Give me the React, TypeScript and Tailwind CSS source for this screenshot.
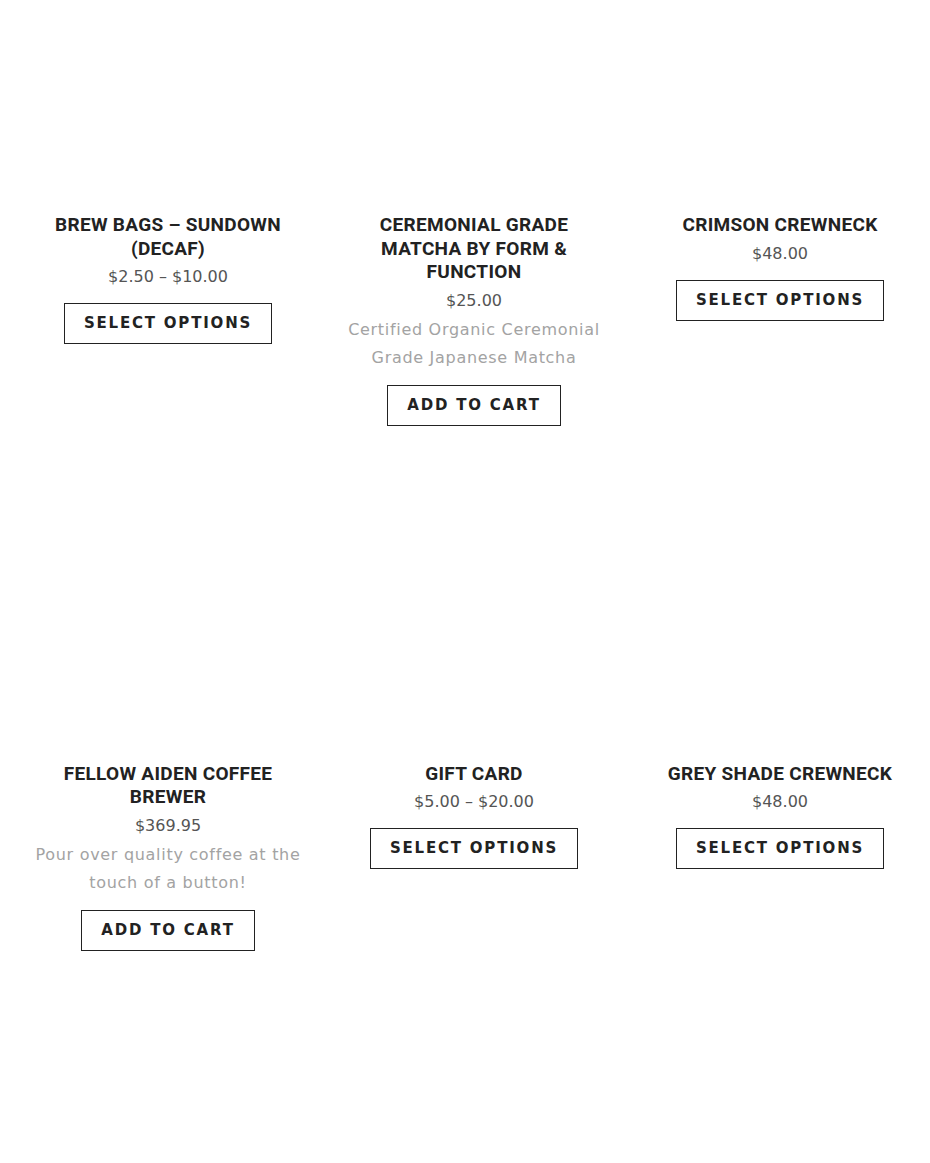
type Product = {
  title: string;
  price: string;
  desc?: string;
  action: string;
};

const products: Product[] = [
  { title: "Brew Bags – Sundown (Decaf)", price: "$2.50 – $10.00", action: "Select options" },
  {
    title: "Ceremonial Grade Matcha by Form & Function",
    price: "$25.00",
    desc: "Certified Organic Ceremonial Grade Japanese Matcha",
    action: "Add to cart",
  },
  { title: "Crimson Crewneck", price: "$48.00", action: "Select options" },
  {
    title: "Fellow Aiden Coffee Brewer",
    price: "$369.95",
    desc: "Pour over quality coffee at the touch of a button!",
    action: "Add to cart",
  },
  { title: "Gift Card", price: "$5.00 – $20.00", action: "Select options" },
  { title: "Grey Shade Crewneck", price: "$48.00", action: "Select options" },
];

function ProductCard({ title, price, desc, action }: Product) {
  return (
    <div className="flex flex-col items-center text-center">
      {/* image slot, empty in this capture */}
      <div className="h-[212px] w-full" />
      <h2 className="w-full px-[18px] pt-[1px] font-['Roboto',sans-serif] text-[19px] font-bold uppercase leading-[23.5px] tracking-[0.3px] text-[#222]">
        {title}
      </h2>
      <p className="mt-[4px] font-['DejaVu_Sans',sans-serif] text-[16px] leading-[26px] text-[#555]">{price}</p>
      {desc && (
        <p className="mt-[2px] font-['DejaVu_Sans',sans-serif] text-[16px] leading-[28px] tracking-[0.7px] text-[#a3a3a3]">
          {desc}
        </p>
      )}
      <button className="mt-[13px] flex h-[41px] items-center border border-[#222] bg-white px-[19px] font-['DejaVu_Sans',sans-serif] text-[15px] font-bold uppercase tracking-[1.8px] text-[#222]">
        {action}
      </button>
    </div>
  );
}

export default function App() {
  return (
    <div className="min-h-[1163px] w-[930px] bg-white pl-[30px] pr-[12px]">
      <div className="grid grid-cols-[276px_276px_276px] gap-x-[30px] gap-y-[123px]">
        {products.map((p) => (
          <ProductCard key={p.title} {...p} />
        ))}
      </div>
    </div>
  );
}
